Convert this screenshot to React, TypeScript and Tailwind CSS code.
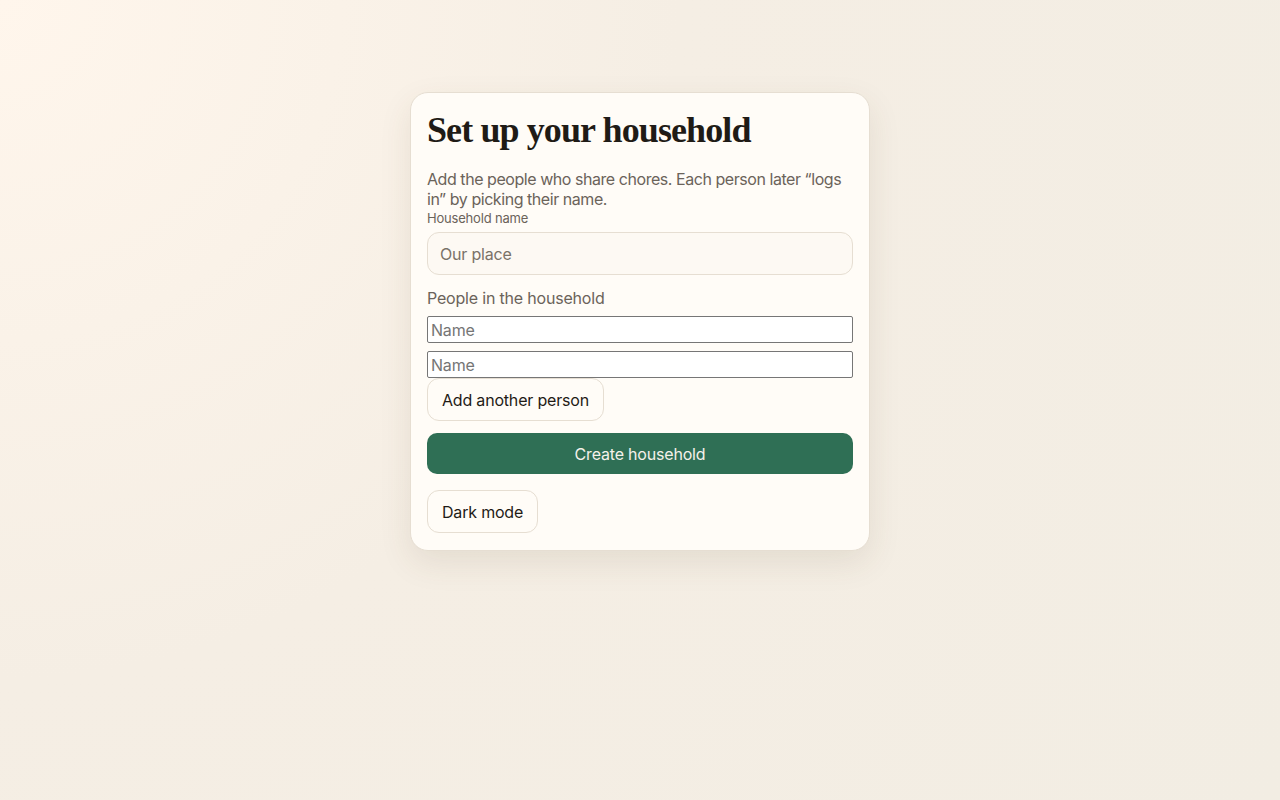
export default function App() {
  return (
    <div
      className="min-h-screen w-full bg-[radial-gradient(circle_at_0%_0%,#fff6ec_0%,#f5eee4_45%,#f2ede3_100%)] flex justify-center tracking-[-0.012em]"
      style={{ fontFamily: "Inter, 'Noto Sans', sans-serif" }}
    >
      <div className="mt-[92px] w-[460px] self-start rounded-[18px] border border-[#e6ded2] bg-[#fffcf7] px-4 pt-4 pb-[17px] shadow-[0_12px_32px_rgba(90,70,40,0.10)] flex flex-col text-[#1f1b16]">
        <h1
          className="text-[36px] leading-[42px] font-bold tracking-[-0.025em]"
          style={{ fontFamily: "'Liberation Serif', 'DejaVu Serif', serif" }}
        >
          Set up your household
        </h1>
        <p className="mt-[18px] text-[16px] leading-[20px] tracking-[-0.028em] text-[#6b635a]">
          Add the people who share chores. Each person later “logs in” by picking their name.
        </p>
        <label className="mt-[1px] text-[13px] leading-[16px] text-[#6b635a]">Household name</label>
        <input
          placeholder="Our place"
          className="mt-[6px] h-[43px] w-full rounded-[12px] border border-[#e6ded2] bg-[#fdf9f3] px-3 text-[16px] placeholder:text-[#7a7268] outline-none"
        />
        <div className="mt-[13px] text-[16px] leading-[20px] text-[#6b635a]">People in the household</div>
        <div className="mt-[8px] flex flex-col gap-[8px]">
          <input
            placeholder="Name"
            className="h-[27px] w-full border border-[#767676] bg-white px-[3px] text-[16px] placeholder:text-[#757575] rounded-[2px]"
          />
          <input
            placeholder="Name"
            className="h-[27px] w-full border border-[#767676] bg-white px-[3px] text-[16px] placeholder:text-[#757575] rounded-[2px]"
          />
        </div>
        <div>
          <button className="h-[43px] rounded-[12px] border border-[#e6ded2] bg-[#fffcf7] px-[14px] text-[16px] text-[#1f1b16]">
            Add another person
          </button>
        </div>
        <button className="mt-[12px] h-[41px] w-full rounded-[10px] bg-[#2f6f55] text-[16px] text-[#f5f1ea]">
          Create household
        </button>
        <div className="mt-[16px]">
          <button className="h-[43px] rounded-[12px] border border-[#e6ded2] bg-[#fffcf7] px-[14px] text-[16px] text-[#1f1b16]">
            Dark mode
          </button>
        </div>
      </div>
    </div>
  );
}
